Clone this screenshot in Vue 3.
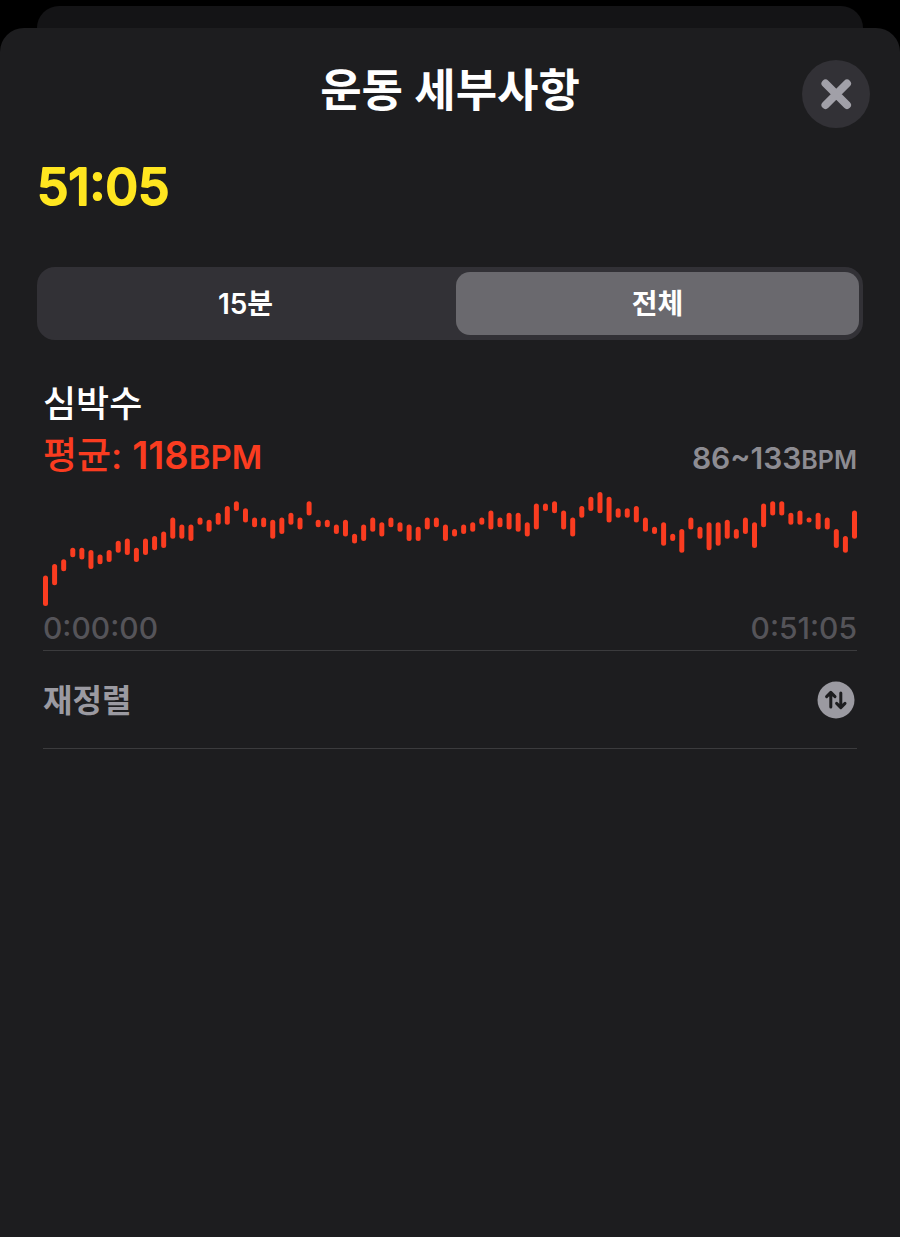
<script setup>
import { ref, computed } from "vue";

const tabs = [
  { id: "recent", label: "15분" },
  { id: "all", label: "전체" },
];
const activeTab = ref("all");

// [low, high] bpm for each slice of the workout
const samples = [
  [86, 97], [95, 102], [101, 104], [107, 109], [106, 109], [102, 108],
  [104, 106], [105, 108], [109, 112], [108, 113], [105, 109], [108, 113],
  [110, 114], [111, 116], [115, 122], [115, 119], [114, 119], [121, 122],
  [118, 121], [121, 124], [121, 127], [127, 129], [122, 126], [120, 122],
  [120, 122], [115, 121], [117, 122], [121, 124], [119, 122], [125, 129],
  [120, 121], [120, 121], [117, 119], [116, 121], [113, 115], [114, 119],
  [118, 122], [116, 120], [120, 122], [118, 120], [114, 119], [114, 118],
  [119, 122], [120, 122], [114, 119], [116, 117], [117, 119], [118, 120],
  [121, 122], [119, 125], [120, 122], [119, 124], [118, 124], [116, 120],
  [119, 128], [127, 128], [126, 129], [119, 125], [116, 122], [124, 127],
  [127, 131], [126, 133], [122, 131], [124, 126], [124, 126], [122, 127],
  [118, 122], [117, 118], [112, 120], [114, 115], [109, 117], [119, 122],
  [115, 118], [110, 120], [112, 120], [115, 121], [115, 117], [117, 122],
  [111, 120], [120, 128], [125, 129], [125, 129], [121, 124], [121, 125],
  [122, 122], [119, 124], [119, 122], [111, 117], [109, 114], [115, 125],
];

const chart = { width: 814, height: 114, cap: 5 };
const min = Math.min(...samples.map((s) => s[0]));
const max = Math.max(...samples.map((s) => s[1]));

const bars = computed(() => {
  const step = (chart.width - chart.cap) / (samples.length - 1);
  const unit = (chart.height - chart.cap) / (max - min);
  return samples.map(([low, high], i) => ({
    x: i * step,
    y: (max - high) * unit,
    height: (high - low) * unit + chart.cap,
  }));
});
</script>

<template>
  <div class="screen">
    <div class="behind"></div>
    <main class="sheet">
      <header class="header">
        <h1>운동 세부사항</h1>
        <button type="button" class="close" aria-label="닫기">
          <svg viewBox="0 0 68 68">
            <path d="M23.5 23.5 L45 45 M45 23.5 L23.5 45" />
          </svg>
        </button>
      </header>

      <svg class="timer" viewBox="0 0 200 60">
        <text x="0" y="49">51:05</text>
      </svg>

      <div class="tabs">
        <button
          v-for="tab in tabs"
          :key="tab.id"
          type="button"
          class="tab"
          :class="{ active: tab.id === activeTab }"
          :aria-pressed="tab.id === activeTab"
          @click="activeTab = tab.id"
        >
          {{ tab.label }}
        </button>
      </div>

      <section class="heart">
        <h2>심박수</h2>
        <div class="summary">
          <p class="average">평균: <span class="value">118<span class="unit">BPM</span></span></p>
          <p class="range">86~133<span class="unit">BPM</span></p>
        </div>
        <svg class="chart" :viewBox="`0 0 ${chart.width} ${chart.height}`">
          <rect
            v-for="(bar, i) in bars"
            :key="i"
            :x="bar.x"
            :y="bar.y"
            :width="chart.cap"
            :height="bar.height"
            rx="2.5"
          />
        </svg>
        <div class="times">
          <span>0:00:00</span>
          <span>0:51:05</span>
        </div>
      </section>

      <button type="button" class="reorder">
        <span>재정렬</span>
        <svg viewBox="0 0 38 38">
          <circle cx="19" cy="19" r="18.5" />
          <path d="M13.8 26 V12 M9.6 15.6 L13.8 11.4 L18 15.6 M23.8 12 V26 M19.6 22.4 L23.8 26.6 L28 22.4" />
        </svg>
      </button>
    </main>
  </div>
</template>

<style>
body {
  margin: 0;
  background: #000;
}
</style>

<style scoped>
.screen {
  display: flex;
  flex-direction: column;
  box-sizing: border-box;
  min-height: 100vh;
  padding-top: 6px;
  background: #000;
  color: #fff;
  font-family: Inter, "Noto Sans CJK KR", sans-serif;
}

.behind {
  height: 22px;
  margin: 0 37px;
  border-radius: 22px 22px 0 0;
  background: #141416;
}

.sheet {
  flex: 1;
  border-radius: 24px 24px 0 0;
  background: #1d1d1f;
}

h1,
h2,
p {
  margin: 0;
}

button {
  padding: 0;
  border: 0;
  background: none;
  color: inherit;
  font-family: inherit;
  cursor: pointer;
}

.header {
  display: grid;
  grid-template-columns: 68px 1fr 68px;
  padding: 32px 30px 0;
}

h1 {
  grid-column: 2;
  font-size: 45px;
  font-weight: 600;
  line-height: 62px;
  text-align: center;
}

.close {
  width: 68px;
  height: 68px;
  border-radius: 50%;
  background: #323136;
}

.close svg {
  display: block;
  fill: none;
  stroke: #a1a0a8;
  stroke-width: 8;
  stroke-linecap: round;
}

.timer {
  display: block;
  width: 200px;
  height: 60px;
  margin: 28px 37px 0;
}

.timer text {
  fill: #ffe620;
  stroke: #ffe620;
  stroke-width: 2px;
  stroke-linejoin: round;
  font-size: 51px;
  font-weight: 500;
}

.tabs {
  display: grid;
  grid-template-columns: 1fr 1fr;
  margin: 51px 37px 0;
  padding: 5px 4px;
  border-radius: 18px;
  background: #323136;
}

.tab {
  height: 63px;
  padding-bottom: 3px;
  border-radius: 14px;
  font-size: 28px;
  font-weight: 600;
}

.tab.active {
  margin-left: 6px;
  background: #6a696e;
}

.tab.active:first-child {
  margin: 0 6px 0 0;
}

.heart {
  margin: 0 43px;
  padding-top: 38px;
  border-bottom: 1px solid #3b3b3d;
}

h2 {
  font-size: 36px;
  font-weight: 500;
  line-height: 52px;
}

.summary {
  display: flex;
  justify-content: space-between;
  align-items: baseline;
  line-height: 50px;
}

.average {
  color: #fa3c20;
  font-size: 37px;
  font-weight: 500;
}

.average .value {
  font-size: 38px;
  font-weight: 600;
}

.average .unit {
  font-size: 33px;
}

.range {
  color: #8d8c92;
  font-size: 30px;
  font-weight: 600;
}

.range .unit {
  font-size: 25px;
}

.chart {
  display: block;
  width: 100%;
  margin-top: 7px;
  fill: #fa3c20;
}

.times {
  display: flex;
  justify-content: space-between;
  color: #555459;
  font-size: 30px;
  font-weight: 500;
  line-height: 44px;
}

.reorder {
  display: flex;
  justify-content: space-between;
  align-items: center;
  width: calc(100% - 86px);
  height: 98px;
  margin: 0 43px;
  border-bottom: 1px solid #3b3b3d;
  color: #9b9aa1;
  font-size: 32px;
  font-weight: 600;
}

.reorder span {
  padding-bottom: 4px;
}

.reorder svg {
  width: 38px;
  height: 38px;
  margin-right: 2px;
}

.reorder circle {
  fill: #9b9aa1;
}

.reorder path {
  fill: none;
  stroke: #1d1d1f;
  stroke-width: 3;
  stroke-linecap: round;
  stroke-linejoin: round;
}
</style>
